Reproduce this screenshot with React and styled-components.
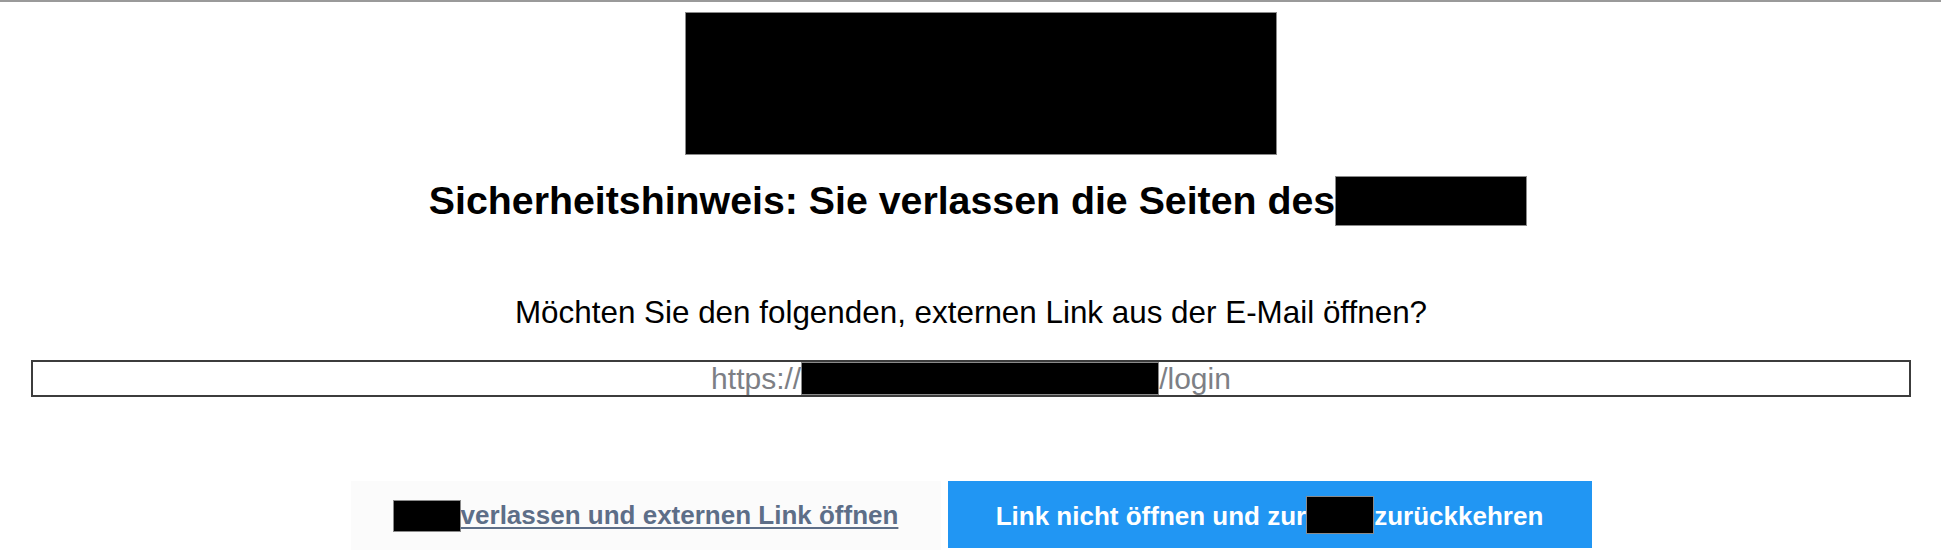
import React from "react";
import styled, { createGlobalStyle } from "styled-components";

const Global = createGlobalStyle`
  html, body { margin: 0; padding: 0; background: #fff; }
  body { font-family: "Liberation Sans", Arial, sans-serif; color: #000; }
`;

const Page = styled.div`
  border-top: 2px solid #9a9a9a;
  display: flex;
  flex-direction: column;
  align-items: center;
  padding: 10px 30px 0 31px;
  min-height: 553px;
  box-sizing: border-box;
`;

const LogoWrap = styled.div`
  padding-left: 19px;
`;

const Logo = styled.div`
  width: 592px;
  height: 143px;
  background: #000;
  box-sizing: border-box;
  border: 1px solid #8a8a8a;
`;

const Heading = styled.h1`
  margin: 20px 0 0;
  padding-left: 14px;
  font-size: 39.3px;
  line-height: 50px;
  font-weight: 700;
  white-space: nowrap;
`;

const Redact = styled.span`
  display: inline-block;
  background: #000;
  box-sizing: border-box;
  border: 1px solid #8a8a8a;
  width: ${(p) => p.$w}px;
  height: ${(p) => p.$h}px;
  vertical-align: ${(p) => p.$va}px;
`;

const Question = styled.p`
  margin: 69px 0 0;
  font-size: 31.4px;
  line-height: 36px;
`;

const UrlBox = styled.div`
  margin-top: 29px;
  align-self: stretch;
  border: 2px solid #3c3c3c;
  height: 37px;
  box-sizing: border-box;
  text-align: center;
  font-size: 30px;
  line-height: 33px;
  color: #7d7f85;
  white-space: nowrap;
  overflow: hidden;
`;

const Actions = styled.div`
  margin-top: 84px;
  display: flex;
  gap: 7px;
  align-items: stretch;
`;

const LeaveButton = styled.a`
  width: 590px;
  height: 69px;
  display: flex;
  align-items: center;
  justify-content: center;
  background: #fbfbfb;
  font-size: 26px;
  font-weight: 700;
  color: #5d6e88;
  white-space: nowrap;
  cursor: pointer;
`;

const LeaveText = styled.span`
  text-decoration: underline;
  text-decoration-thickness: 2px;
  text-underline-offset: 3px;
`;

const StayButton = styled.button`
  width: 644px;
  height: 67px;
  border: none;
  background: #2196f3;
  color: #fff;
  font-family: "Liberation Sans", Arial, sans-serif;
  font-size: 26px;
  font-weight: 700;
  white-space: nowrap;
  cursor: pointer;
  padding: 0;
`;

export default function App() {
  return (
    <>
      <Global />
      <Page>
        <LogoWrap>
          <Logo />
        </LogoWrap>
        <Heading>
          Sicherheitshinweis: Sie verlassen die Seiten des
          <Redact $w={192} $h={50} $va={-12} />
        </Heading>
        <Question>Möchten Sie den folgenden, externen Link aus der E-Mail öffnen?</Question>
        <UrlBox>
          https://<Redact $w={358} $h={33} $va={-6} />/login
        </UrlBox>
        <Actions>
          <LeaveButton>
            <Redact $w={68} $h={32} $va={-9} />
            <LeaveText>verlassen und externen Link öffnen</LeaveText>
          </LeaveButton>
          <StayButton>
            Link nicht öffnen und zur<Redact $w={68} $h={38} $va={-9} />zurückkehren
          </StayButton>
        </Actions>
      </Page>
    </>
  );
}
